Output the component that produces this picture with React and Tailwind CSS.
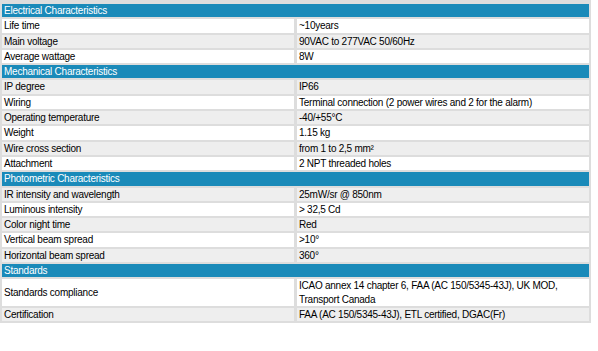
import React from 'react';

const sections = [
    {
        title: 'Electrical Characteristics',
        rows: [
            ['Life time', '~10years'],
            ['Main voltage', '90VAC to 277VAC 50/60Hz'],
            ['Average wattage', '8W'],
        ],
    },
    {
        title: 'Mechanical Characteristics',
        rows: [
            ['IP degree', 'IP66'],
            ['Wiring', 'Terminal connection (2 power wires and 2 for the alarm)'],
            ['Operating temperature', '-40/+55°C'],
            ['Weight', '1.15 kg'],
            ['Wire cross section', 'from 1 to 2,5 mm²'],
            ['Attachment', '2 NPT threaded holes'],
        ],
    },
    {
        title: 'Photometric Characteristics',
        rows: [
            ['IR intensity and wavelength', '25mW/sr @ 850nm'],
            ['Luminous intensity', '> 32,5 Cd'],
            ['Color night time', 'Red'],
            ['Vertical beam spread', '>10°'],
            ['Horizontal beam spread', '360°'],
        ],
    },
    {
        title: 'Standards',
        rows: [
            ['Standards compliance', 'ICAO annex 14 chapter 6, FAA (AC 150/5345-43J), UK MOD, Transport Canada'],
            ['Certification', 'FAA (AC 150/5345-43J), ETL certified, DGAC(Fr)'],
        ],
    },
];

export default function App() {
    let n = 0;
    return (
        <div className="bg-white w-[598px] h-[351px]" style={{ fontFamily: '"Liberation Sans", Arial, sans-serif' }}>
            <div className="w-[591px] bg-[#dddddd] pt-[4px] pb-[2px] px-[2px] flex flex-col gap-[2px] text-[10px] tracking-[-0.25px] leading-[13.3px] text-black">
                {sections.map(s => (
                    <React.Fragment key={s.title}>
                        <div className="bg-[#1a8ab9] text-white pl-[2px]">{s.title}</div>
                        {s.rows.map(([label, value]) => {
                            n += 1;
                            const bg = n % 2 === 1 ? 'bg-white' : 'bg-[#eeeeee]';
                            return (
                                <div key={label} className="flex gap-[3px]">
                                    <div className={`w-[292px] pl-[2px] flex items-center ${bg}`}>{label}</div>
                                    <div className={`flex-1 pl-[2px] pr-[30px] ${bg}`}>{value}</div>
                                </div>
                            );
                        })}
                    </React.Fragment>
                ))}
            </div>
        </div>
    );
}
